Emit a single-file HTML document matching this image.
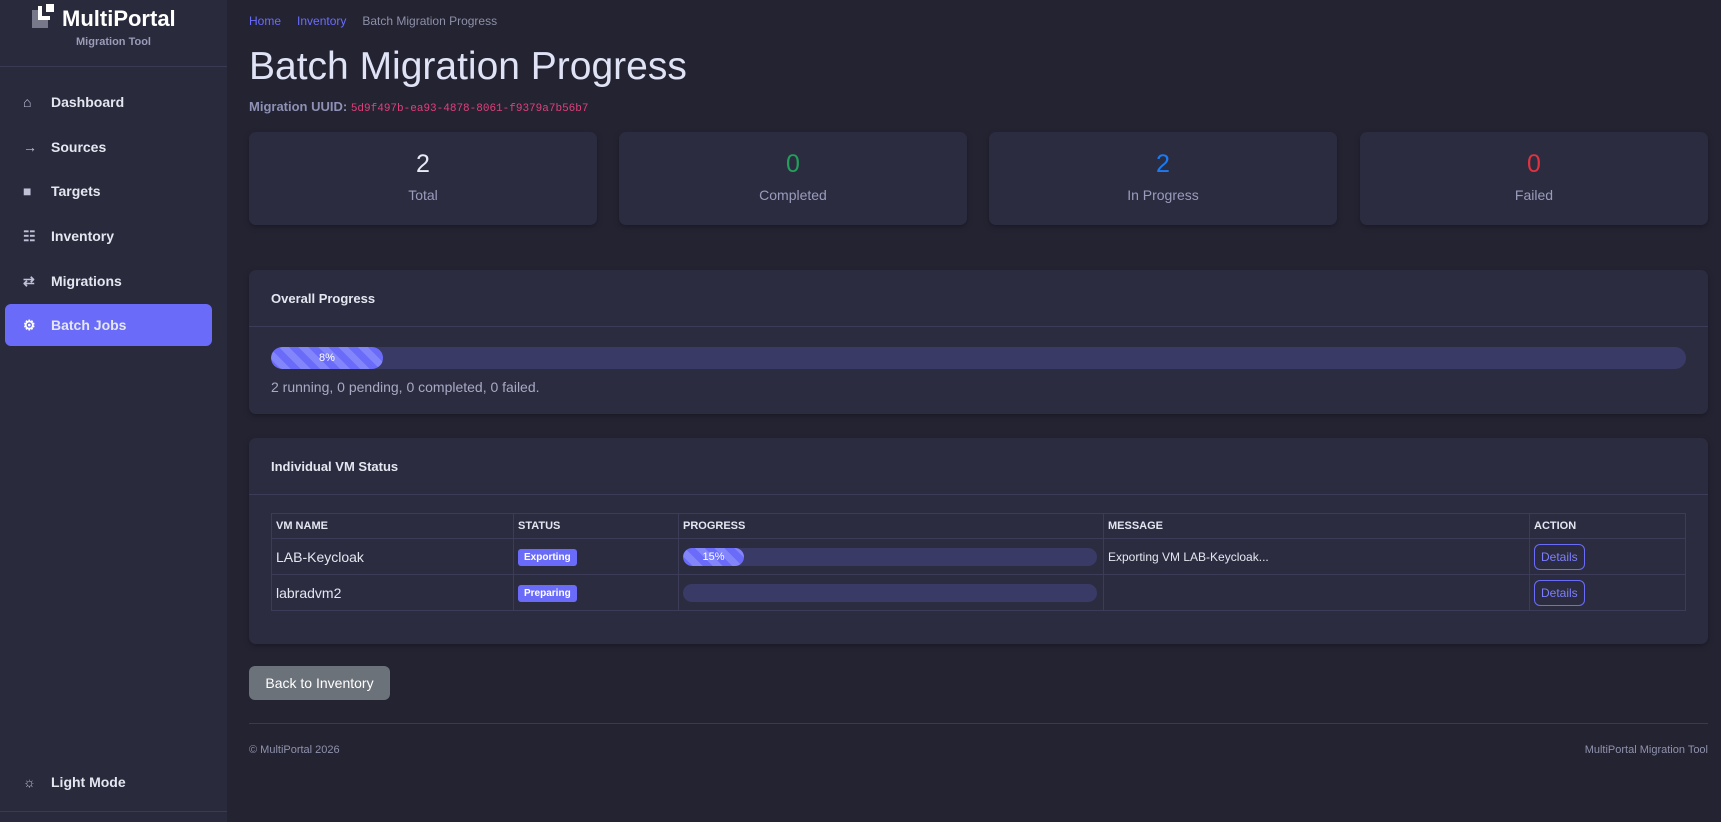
<!DOCTYPE html>
<html><head><style>
*{box-sizing:border-box;margin:0;padding:0}
body{width:1721px;height:822px;background:#232332;font-family:"Liberation Sans",sans-serif;color:#e4e6f0;position:relative;overflow:hidden}
.sb{position:absolute;left:0;top:0;width:227px;height:822px;background:#2a2a3d}
.logo{position:absolute;left:32px;top:6px;font-weight:bold;font-size:22px;color:#fff}
.logo .ic{display:inline-block;width:24px;height:24px;vertical-align:-4px;margin-right:6px;position:relative}
.sub{position:absolute;top:36px;left:0;width:227px;text-align:center;font-size:11px;font-weight:bold;color:#9a9cb8}
.sbline{position:absolute;left:0;top:66px;width:227px;border-top:1px solid #3a3a52}
.nav{position:absolute;left:5px;width:207px;height:42px;font-size:14px;font-weight:bold;color:#e4e6f0;line-height:42px;padding-left:46px;border-radius:6px}
.nav i{position:absolute;left:18px;font-style:normal;color:#bfc1d6;font-size:14px}
.nav.act{background:#6a6cf9}
.nav.act i{color:#fff}
.main{position:absolute;left:249px;top:0;width:1459px}
.bc{position:absolute;top:14px;font-size:12px}
.bc a{color:#6a6cff;text-decoration:none;margin-right:16px}
h1{position:absolute;top:45px;font-size:39px;font-weight:normal;color:#dfe3f5}
.uuid{position:absolute;top:99px;font-size:13px;font-weight:bold;color:#8e90b5}
.uuid code{font-family:"Liberation Mono",monospace;font-size:11px;color:#e0407a;font-weight:normal}
.card{position:absolute;background:#2c2c41;border-radius:7px;box-shadow:0 2px 6px rgba(0,0,0,.25)}
.stat{top:132px;width:348px;height:93px;text-align:center}
.stat b{display:block;font-weight:normal;font-size:25px;margin-top:18px}
.stat span{display:block;font-size:14px;color:#9a9cbc;margin-top:8px}
.ch{height:57px;line-height:57px;padding-left:22px;font-weight:bold;font-size:13px;border-bottom:1px solid #3c3c58}
.bar{background:#393a66;border-radius:11px;height:22px;position:relative;overflow:hidden}
.fill{position:absolute;left:0;top:0;height:100%;border-radius:11px;background:repeating-linear-gradient(45deg,#6a6cf9 0 7px,#8385fa 7px 14px);color:#fff;font-size:11px;text-align:center;line-height:22px}
table{position:absolute;left:22px;top:75px;width:1415px;border-collapse:collapse;font-size:14px}
td,th{border:1px solid #3c3c58;text-align:left;padding:0 4px}
th{height:25px;font-size:11px;font-weight:bold}
td{height:36px}
.badge{display:inline-block;background:#6a6cf9;color:#fff;font-size:10px;font-weight:bold;padding:3px 6px;border-radius:3px}
.btn{display:inline-block;border:1px solid #6a6cf9;color:#7c7eff;border-radius:6px;padding:5px 6px;font-size:12px}
</style></head><body>
<div class="sb">
<div class="logo"><span class="ic"><span style="position:absolute;left:0;top:4px;width:16px;height:18px;background:#77798a"></span><span style="position:absolute;left:6px;top:0;width:12px;height:14px;border-left:4px solid #fff;border-bottom:4px solid #fff;background:#2a2a3d"></span><span style="position:absolute;left:14px;top:-2px;width:8px;height:8px;background:#fff"></span></span>MultiPortal</div>
<div class="sub">Migration Tool</div>
<div class="sbline"></div>
<div class="nav" style="top:81px"><i>⌂</i>Dashboard</div>
<div class="nav" style="top:126px"><i>→</i>Sources</div>
<div class="nav" style="top:170px"><i>■</i>Targets</div>
<div class="nav" style="top:215px"><i>☷</i>Inventory</div>
<div class="nav" style="top:260px"><i>⇄</i>Migrations</div>
<div class="nav act" style="top:304px"><i>⚙</i>Batch Jobs</div>
<div class="nav" style="top:761px"><i>☼</i>Light Mode</div>
<div style="position:absolute;left:0;top:811px;width:227px;border-top:1px solid #3a3a52"></div>
</div>
<div class="main">
<div class="bc"><a>Home</a><a>Inventory</a><span style="color:#8e90a8">Batch Migration Progress</span></div>
<h1>Batch Migration Progress</h1>
<div class="uuid">Migration UUID: <code>5d9f497b-ea93-4878-8061-f9379a7b56b7</code></div>
<div class="card stat" style="left:0"><b style="color:#e8eaf5">2</b><span>Total</span></div>
<div class="card stat" style="left:370px"><b style="color:#22a05a">0</b><span>Completed</span></div>
<div class="card stat" style="left:740px"><b style="color:#1a7cf5">2</b><span>In Progress</span></div>
<div class="card stat" style="left:1111px"><b style="color:#e0323f">0</b><span>Failed</span></div>
<div class="card" style="left:0;top:270px;width:1459px;height:144px">
<div class="ch">Overall Progress</div>
<div class="bar" style="position:absolute;left:22px;top:77px;width:1415px"><div class="fill" style="width:112px">8%</div></div>
<div style="position:absolute;left:22px;top:109px;font-size:14px;color:#a8aac4">2 running, 0 pending, 0 completed, 0 failed.</div>
</div>
<div class="card" style="left:0;top:438px;width:1459px;height:206px">
<div class="ch">Individual VM Status</div>
<table>
<tr><th style="width:242px">VM NAME</th><th style="width:165px">STATUS</th><th style="width:425px">PROGRESS</th><th style="width:426px">MESSAGE</th><th>ACTION</th></tr>
<tr><td>LAB-Keycloak</td><td><span class="badge">Exporting</span></td><td><div class="bar" style="height:18px;width:414px"><div class="fill" style="width:61px;line-height:18px">15%</div></div></td><td style="font-size:12px">Exporting VM LAB-Keycloak...</td><td><span class="btn">Details</span></td></tr>
<tr><td>labradvm2</td><td><span class="badge">Preparing</span></td><td><div class="bar" style="height:18px;width:414px"></div></td><td></td><td><span class="btn">Details</span></td></tr>
</table>
</div>
<div style="position:absolute;left:0;top:666px;width:141px;height:34px;background:#6c727a;border-radius:6px;color:#fff;font-size:14px;line-height:34px;text-align:center">Back to Inventory</div>
<div style="position:absolute;left:0;top:723px;width:1459px;border-top:1px solid #3a3a55"></div>
<div style="position:absolute;left:0;top:744px;font-size:11px;color:#9092ac">© MultiPortal 2026</div>
<div style="position:absolute;right:0;top:744px;font-size:11px;color:#9092ac">MultiPortal Migration Tool</div>
</div>
</body></html>
